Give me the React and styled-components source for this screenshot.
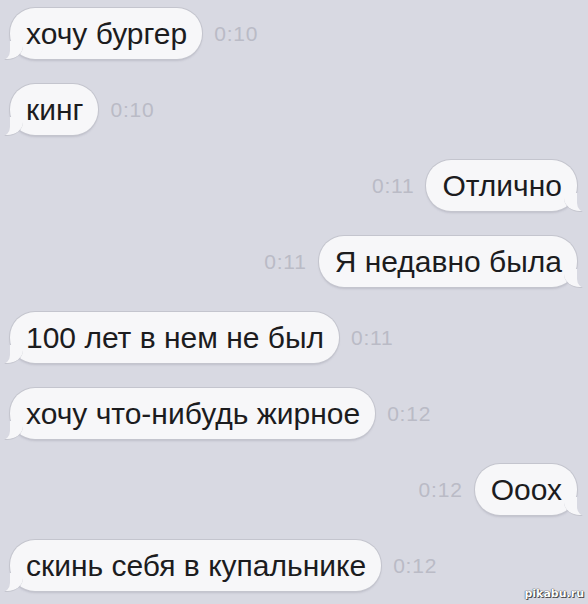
import React from 'react'
import styled, { createGlobalStyle } from 'styled-components';

const mensajes = [
  { texto: 'хочу бургер', hora: '0:10', mio: false },
  { texto: 'кинг', hora: '0:10', mio: false },
  { texto: 'Отлично', hora: '0:11', mio: true },
  { texto: 'Я недавно была', hora: '0:11', mio: true },
  { texto: '100 лет в нем не был', hora: '0:11', mio: false },
  { texto: 'хочу что-нибудь жирное', hora: '0:12', mio: false },
  { texto: 'Ооох', hora: '0:12', mio: true },
  { texto: 'скинь себя в купальнике', hora: '0:12', mio: false },
];

function App() {
  return (
    <>
      <Global />
      <Chat>
        {mensajes.map((m, i) => (
          <Fila key={i} $mio={m.mio}>
            {m.mio && <Hora>{m.hora}</Hora>}
            <Burbuja $mio={m.mio}>{m.texto}</Burbuja>
            {!m.mio && <Hora>{m.hora}</Hora>}
          </Fila>
        ))}
        <Marca>pikabu.ru</Marca>
      </Chat>
    </>
  )
}

const Global = createGlobalStyle`
  html, body {
    margin: 0;
    padding: 0;
    background: #d8d9e2;
  }
`;

const Chat = styled.div`
  width: 588px;
  height: 604px;
  box-sizing: border-box;
  padding: 8px 11px 0 10px;
  display: flex;
  flex-direction: column;
  gap: 25px;
  background: #d8d9e2;
  font-family: "Liberation Sans", Arial, sans-serif;
  position: relative;
  overflow: hidden;
`;

const Fila = styled.div`
  display: flex;
  align-items: center;
  justify-content: ${p => (p.$mio ? 'flex-end' : 'flex-start')};
  gap: 12px;
`;

const Burbuja = styled.div`
  position: relative;
  height: 51px;
  box-sizing: border-box;
  padding: 0 15px 0 16px;
  display: flex;
  align-items: center;
  font-size: 30px;
  color: #1c1c1e;
  background: #f7f7f9;
  border-radius: 25px;
  box-shadow: 0 0 0 1px #c4c5ce, 0 2px 2px rgba(120, 120, 135, 0.25);

  &::before {
    content: "";
    position: absolute;
    bottom: -1px;
    ${p => (p.$mio ? 'right: -7px;' : 'left: -7px;')}
    width: 20px;
    height: 18px;
    background: #f7f7f9;
    ${p => (p.$mio
      ? 'border-bottom-left-radius: 16px 14px;'
      : 'border-bottom-right-radius: 16px 14px;')}
    border-bottom: 1px solid #c4c5ce;
    z-index: 0;
  }

  &::after {
    content: "";
    position: absolute;
    bottom: -2px;
    ${p => (p.$mio ? 'right: -11px;' : 'left: -11px;')}
    width: 11px;
    height: 20px;
    background: #d8d9e2;
    ${p => (p.$mio
      ? 'border-bottom-left-radius: 10px;'
      : 'border-bottom-right-radius: 10px;')}
    z-index: 1;
  }
`;

const Hora = styled.span`
  font-size: 21px;
  color: #babbc6;
  letter-spacing: 0.8px;
`;

const Marca = styled.span`
  position: absolute;
  right: 4px;
  bottom: 4px;
  font-family: "DejaVu Sans", sans-serif;
  font-size: 11px;
  font-weight: 700;
  color: #ffffff;
  text-shadow: 0 0 1px #333, 0 0 1px #333, 1px 1px 0 #555;
`;

export default App
